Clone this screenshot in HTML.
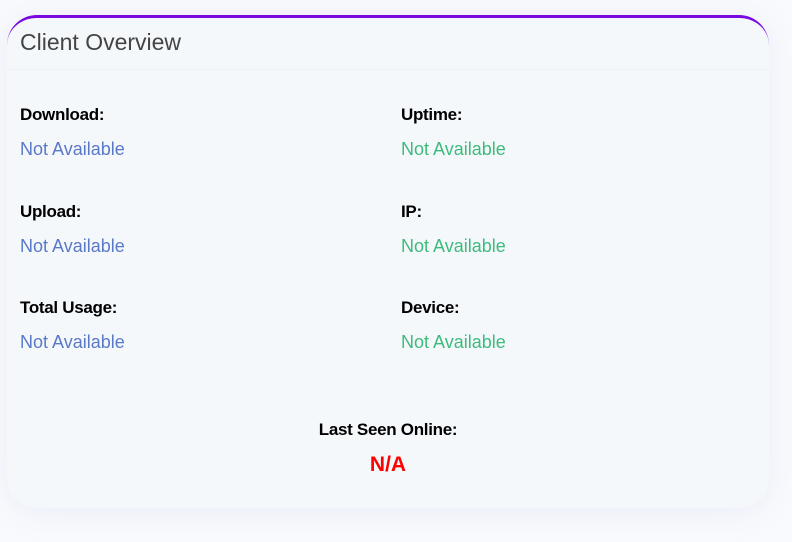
<!DOCTYPE html>
<html><head><style>
html,body{margin:0;padding:0;width:792px;height:542px;background:#f9fafd;overflow:hidden;font-family:"Liberation Sans",sans-serif;}
.card{position:absolute;left:7px;top:15px;width:762px;height:493px;background:#f5f8fb;border-radius:30px;border-top:3px solid #7a0ae0;box-sizing:border-box;box-shadow:0 4px 30px rgba(200,210,235,0.3);}
.hdr{position:absolute;left:0;top:0;width:100%;height:51px;border-bottom:1px solid #edf0f4;}
.title{position:absolute;left:13px;top:11px;font-size:23px;color:#444;}
.t{position:absolute;font-size:17px;font-weight:bold;color:#000;letter-spacing:-0.3px;}
.v{position:absolute;font-size:18px;}
.b{color:#5a78c8}.g{color:#3dbb7c}
</style></head><body>
<div class="card">
<div class="hdr"><div class="title">Client Overview</div></div>
<div class="t" style="left:13px;top:87px">Download:</div>
<div class="v b" style="left:13px;top:121px">Not Available</div>
<div class="t" style="left:394px;top:87px">Uptime:</div>
<div class="v g" style="left:394px;top:121px">Not Available</div>
<div class="t" style="left:13px;top:184px">Upload:</div>
<div class="v b" style="left:13px;top:218px">Not Available</div>
<div class="t" style="left:394px;top:184px">IP:</div>
<div class="v g" style="left:394px;top:218px">Not Available</div>
<div class="t" style="left:13px;top:280px">Total Usage:</div>
<div class="v b" style="left:13px;top:314px">Not Available</div>
<div class="t" style="left:394px;top:280px">Device:</div>
<div class="v g" style="left:394px;top:314px">Not Available</div>
<div class="t" style="left:0;width:762px;text-align:center;top:402px">Last Seen Online:</div>
<div style="position:absolute;left:0;width:762px;text-align:center;top:435px;font-size:21px;color:#f00;font-weight:bold">N/A</div>
</div>
</body></html>
